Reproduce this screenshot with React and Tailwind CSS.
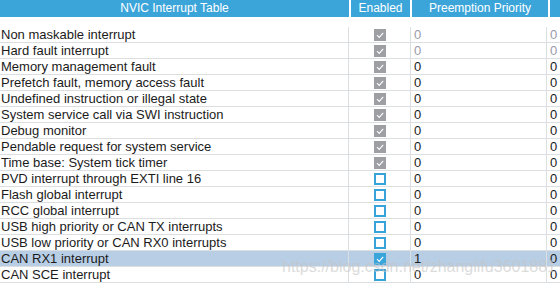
import React from 'react';

const rows = [
	{ name: 'Non maskable interrupt', enabled: 'locked', prio: '0', sub: '0', dim: true },
	{ name: 'Hard fault interrupt', enabled: 'locked', prio: '0', sub: '0', dim: true },
	{ name: 'Memory management fault', enabled: 'locked', prio: '0', sub: '0' },
	{ name: 'Prefetch fault, memory access fault', enabled: 'locked', prio: '0', sub: '0' },
	{ name: 'Undefined instruction or illegal state', enabled: 'locked', prio: '0', sub: '0' },
	{ name: 'System service call via SWI instruction', enabled: 'locked', prio: '0', sub: '0' },
	{ name: 'Debug monitor', enabled: 'locked', prio: '0', sub: '0' },
	{ name: 'Pendable request for system service', enabled: 'locked', prio: '0', sub: '0' },
	{ name: 'Time base: System tick timer', enabled: 'locked', prio: '0', sub: '0' },
	{ name: 'PVD interrupt through EXTI line 16', enabled: 'off', prio: '0', sub: '0' },
	{ name: 'Flash global interrupt', enabled: 'off', prio: '0', sub: '0' },
	{ name: 'RCC global interrupt', enabled: 'off', prio: '0', sub: '0' },
	{ name: 'USB high priority or CAN TX interrupts', enabled: 'off', prio: '0', sub: '0' },
	{ name: 'USB low priority or CAN RX0 interrupts', enabled: 'off', prio: '0', sub: '0' },
	{ name: 'CAN RX1 interrupt', enabled: 'on', prio: '1', sub: '0', selected: true },
	{ name: 'CAN SCE interrupt', enabled: 'off', prio: '0', sub: '0' },
];

function Check({ state }) {
	if (state === 'off') {
		return <div className="w-[12px] h-[12px] border-2 border-[#38a3d9] bg-white" />;
	}
	const bg = state === 'locked' ? 'bg-[#9d9fa3]' : 'bg-[#3aa5db]';
	return (
		<div className={`w-[12px] h-[12px] ${bg} flex items-center justify-center`}>
			<svg width="10" height="10" viewBox="0 0 10 10">
				<path d="M2 5.2 L4.2 7.4 L8.2 2.8" stroke="#ffffff" strokeWidth="1.1" fill="none" />
			</svg>
		</div>
	);
}

export default function App() {
	return (
		<div
			className="relative w-[560px] h-[289px] bg-white overflow-hidden"
			style={{ fontFamily: '"Liberation Sans", Arial, sans-serif' }}
		>
			{/* header */}
			<div className="flex h-[17px] gap-[2px] text-[12px] text-white leading-[17px]">
				<div className="w-[349px] bg-[#3ba5da] text-center">NVIC Interrupt Table</div>
				<div className="w-[59px] bg-[#3ba5da] text-center">Enabled</div>
				<div className="w-[136px] bg-[#3ba5da] text-center">Preemption Priority</div>
				<div className="flex-1 bg-[#3ba5da]" />
			</div>

			{/* rows */}
			<div className="mt-[10px] text-[13px] text-[#1b1b1b]">
				{rows.map((r, i) => (
					<div
						key={i}
						className={`flex h-[16px] leading-[16px] border-b border-[#dcdfe2] ${r.selected ? 'bg-[#b8cee5]' : ''}`}
					>
						<div className="w-[349px] pl-[1px] border-r border-[#dcdfe2] whitespace-nowrap">{r.name}</div>
						<div className="w-[62px] border-r border-[#dcdfe2] flex items-center justify-center pt-[1px]">
							<Check state={r.enabled} />
						</div>
						<div className={`w-[136px] pl-[3px] border-r border-[#dcdfe2] ${r.dim ? 'text-[#9a9aa8]' : ''}`}>
							{r.prio}
						</div>
						<div className={`flex-1 pl-[3px] ${r.dim ? 'text-[#9a9aa8]' : ''}`}>{r.sub}</div>
					</div>
				))}
			</div>

			{/* watermark */}
			<div className="absolute left-[282px] top-[255px] text-[16px] text-[#c4c4c4]/60 whitespace-nowrap pointer-events-none">
				https://blog.csdn.net/zhanglifu3601881
			</div>
		</div>
	);
}
